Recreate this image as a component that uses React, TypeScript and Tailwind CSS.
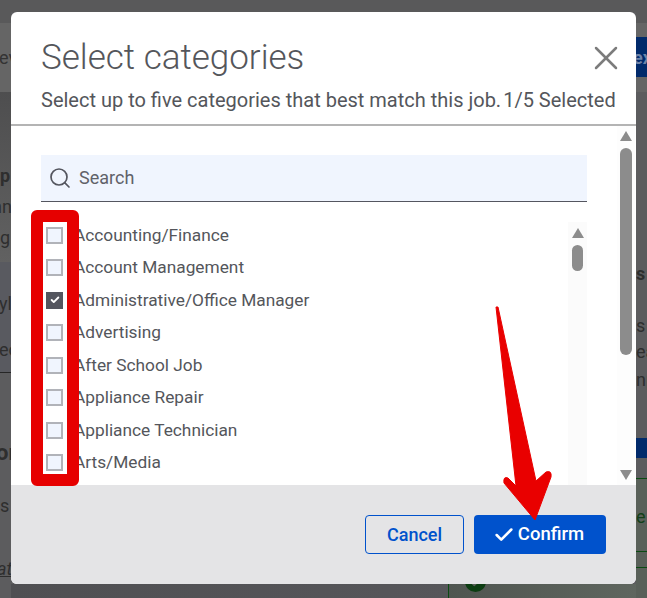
import React from 'react';
import { Search, X, Check } from 'lucide-react';

const categories = [
  'Accounting/Finance',
  'Account Management',
  'Administrative/Office Manager',
  'Advertising',
  'After School Job',
  'Appliance Repair',
  'Appliance Technician',
  'Arts/Media',
  'Automotive',
];

const Up = () => (
  <div className="w-0 h-0 border-x-[6.5px] border-x-transparent border-b-[10px] border-b-[#8c8c8c]" />
);

const Down = () => (
  <div className="w-0 h-0 border-x-[6.5px] border-x-transparent border-t-[10px] border-t-[#8c8c8c] mt-auto mb-[5px]" />
);

// a line of the page behind the overlay, cut by the dialog
const Clip = ({ children, className = '' }: { children: React.ReactNode; className?: string }) => (
  <div className={`h-[26px] shrink-0 flex items-center whitespace-nowrap text-[18px] ${className}`}>{children}</div>
);

const LeftStrip = () => (
  <div className="w-[11px] shrink-0 h-full flex flex-col overflow-hidden text-[#2e2e2e]">
    <div className="h-[23px] bg-[#59595a]" />
    <div className="h-[69px] bg-[#656565] flex items-center text-[18px] whitespace-nowrap">
      <span className="-ml-[1px] text-[#333333]">ev</span>
    </div>
    <div className="h-[170px] bg-gradient-to-b from-[#4e4e4f] to-[#616161] pt-[70px] flex flex-col gap-[5px]">
      <Clip className="font-bold">p</Clip>
      <Clip className="-ml-[8px]">nn</Clip>
      <Clip>g</Clip>
    </div>
    <div className="h-[111px] bg-[#595a60] border-b border-[#262626] pt-[28px] flex flex-col gap-[20px]">
      <Clip className="-ml-[1px]">yl</Clip>
      <Clip className="-ml-[1px]">ec</Clip>
    </div>
    <div className="flex-1 bg-[#5c5c5e] pt-[66px] flex flex-col">
      <Clip className="font-bold -ml-[4px] text-[22px]">or</Clip>
      <Clip className="mt-[27px] text-[16px]">s l</Clip>
      <Clip className="mt-[37px] italic underline -ml-[3px]">at</Clip>
    </div>
  </div>
);

const RightStrip = () => (
  <div className="w-[11px] shrink-0 h-full flex flex-col overflow-hidden text-[#2e2e2e]">
    <div className="h-[23px] bg-[#59595a]" />
    <div className="h-[14px] bg-[#656565]" />
    <div className="h-[40px] bg-[#012a6b] text-[#6f83a8] font-bold flex items-center text-[18px]">
      <span className="-ml-[3px]">ex</span>
    </div>
    <div className="h-[15px] bg-[#656565]" />
    <div className="h-[346px] bg-[#5c5c5e] pt-[168px] flex flex-col">
      <Clip className="font-bold">s</Clip>
      <Clip className="mt-[26px]">s</Clip>
      <Clip>ea</Clip>
      <Clip className="mt-[2px]">np</Clip>
    </div>
    <div className="h-[20px] bg-[#012a6b]" />
    <div className="h-[20px] bg-[#5c5c5e]" />
    <div className="flex-1 bg-[#596059] flex flex-col">
      <div className="h-[74px] border-y border-[#0b4a12] pt-[24px] text-[#123f18]">
        <Clip>e</Clip>
      </div>
      <div className="h-[16px] border-b border-[#0b4a12]" />
    </div>
  </div>
);

export default function App() {
  return (
    <div
      className="relative w-[647px] h-[598px] overflow-hidden flex bg-[#5c5c5e]"
      style={{ fontFamily: 'Roboto, sans-serif' }}
    >
      <LeftStrip />

      <div className="w-[625px] shrink-0 h-full flex flex-col">
        <div className="h-[12px] bg-[#59595a]" />

        <div className="h-[572px] shrink-0 bg-white rounded-[6px] overflow-hidden flex flex-col text-[#54565b]">
          <div className="h-[114px] shrink-0 border-b-2 border-[#b4b4b4] px-[30px] pt-[24px]">
            <div className="flex items-center justify-between h-[44px]">
              <h2 className="text-[35px] font-light leading-[44px]">Select categories</h2>
              <X className="w-[40px] h-[40px] -mr-[20px] text-[#7c7c7c]" strokeWidth={1.5} />
            </div>
            <p className="text-[20px] leading-[26px] mt-[7px] whitespace-nowrap flex">
              <span>Select up to five categories that best match this job.</span>
              <span className="ml-[2px]">1/5 Selected</span>
            </p>
          </div>

          <div className="flex-1 flex min-h-0">
            <div className="w-[576px] pl-[30px] pt-[29px] overflow-hidden">
              <div className="h-[47px] w-[546px] bg-[#f0f5fe] border-b border-[#54565f] flex items-center pl-[7px] gap-[7px]">
                <Search className="w-[24px] h-[24px] text-[#54565f]" strokeWidth={1.7} />
                <span className="text-[18px] text-[#606269] pb-[2px]">Search</span>
              </div>
              <div className="mt-[20px] w-[546px] flex h-[300px]">
                <div className="flex-1 pl-[5px] flex flex-col gap-[6.5px]">
                  {categories.map((c, i) => (
                    <div key={c} className="h-[26px] shrink-0 flex items-center gap-[11px] text-[17.3px] whitespace-nowrap">
                      <span
                        className={`w-[17px] h-[17px] border-2 flex items-center justify-center ${
                          i === 2 ? 'bg-[#54565f] border-[#54565f]' : 'bg-[#f0f5fe] border-[#b1b3b9]'
                        }`}
                      >
                        {i === 2 && <Check className="w-[10px] h-[10px] text-white" strokeWidth={4.5} />}
                      </span>
                      <span className="pt-[1px]">{c}</span>
                    </div>
                  ))}
                </div>
                <div className="w-[19px] bg-[#fbfbfb] flex flex-col items-center pt-[6px]">
                  <Up />
                  <div className="w-[11px] h-[26px] mt-[7px] rounded-full bg-[#8c8c8c]" />
                </div>
              </div>
            </div>
            <div className="flex-1 flex justify-end">
              <div className="w-[18px] mr-[1px] bg-[#fdfdfd] flex flex-col items-center pt-[5px]">
                <Up />
                <div className="w-[12px] h-[207px] mt-[7px] rounded-full bg-[#8c8c8c]" />
                <Down />
              </div>
            </div>
          </div>

          <div className="h-[99px] shrink-0 bg-[#e4e4e6] flex items-start justify-end gap-[10px] pt-[30px] pr-[30px]">
            <button className="w-[99px] h-[39px] rounded-[4px] border border-[#0052cc] text-[#0052cc] text-[18px] font-medium">
              Cancel
            </button>
            <button className="w-[132px] h-[39px] rounded-[4px] bg-[#0052cc] text-white text-[18.5px] font-medium flex items-center justify-center gap-[3px] pr-[3px]">
              <Check className="w-[22px] h-[22px]" strokeWidth={2.8} />
              Confirm
            </button>
          </div>
        </div>

        <div className="flex-1 flex overflow-hidden">
          <div className="w-[437px] bg-gradient-to-r from-[#4f4f52] to-[#56565a]" />
          <div className="flex-1 bg-gradient-to-r from-[#4f5550] to-[#5f665f] border-l border-[#0b4a12] pl-[16px]">
            <div className="w-[21px] h-[21px] -mt-[13px] rounded-full bg-[#0c3d12] flex items-center justify-center">
              <Check className="w-[14px] h-[14px] text-[#596059]" strokeWidth={4} />
            </div>
          </div>
        </div>
      </div>

      <RightStrip />

      {/* red annotations */}
      <div className="absolute left-[31px] top-[210px] w-[48px] h-[276px] border-[12px] border-[#e60000] rounded-[6px]" />
      <svg className="absolute left-0 top-0 w-[647px] h-[598px] pointer-events-none" viewBox="0 0 647 598">
        <path
          d="M496 307 L516 486 L508 478 Q503 476 504 483 L535 520 L551 477 Q552 470 546 472 L536 481 L498 307 Z"
          fill="#e90000"
          stroke="#e90000"
          strokeWidth="1"
          strokeLinejoin="round"
        />
      </svg>
    </div>
  );
}
